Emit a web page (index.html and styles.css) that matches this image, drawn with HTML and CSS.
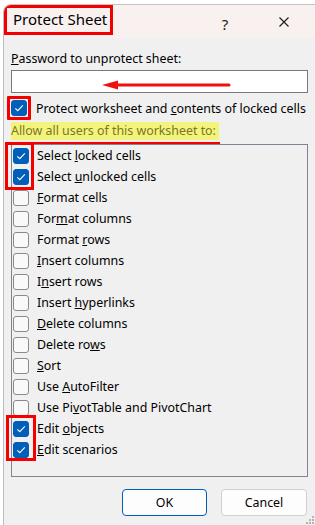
FILE: index.html
```html
<!DOCTYPE html>
<html>
<head>
<meta charset="utf-8">
<link rel="stylesheet" href="styles.css">
</head>
<body>
<div class="window">
  <div class="titlebar">
    <span class="title">Protect Sheet</span>
    <span class="spacer"></span>
    <span class="help">?</span>
    <span class="close"><svg width="10" height="10" viewBox="0 0 10 10"><path d="M0.5 0.5L9.5 9.5M9.5 0.5L0.5 9.5" stroke="#1a1a1a" stroke-width="1.1" fill="none"/></svg></span>
  </div>
  <div class="content">
    <div class="label"><u>P</u>assword to unprotect sheet:</div>
    <div class="input">
      <svg class="arrow" width="130" height="12" viewBox="0 0 130 12"><path d="M15 6H128" stroke="#f01010" stroke-width="3" stroke-linecap="round"/><path d="M1 6L17 1.5V10.5Z" fill="#f01010"/></svg>
    </div>
    <div class="main-check">
      <span class="boxed"><span class="cb checked"><svg width="16" height="16" viewBox="0 0 16 16"><path d="M4.3 8.3L6.8 10.7L11.8 5.4" stroke="#fff" stroke-width="1.1" fill="none"/></svg></span></span>
      <span class="text">Protect worksheet and <u>c</u>ontents of locked cells</span>
    </div>
    <div class="allow"><span class="hl">Allow all users of this worksheet to:</span></div>
    <div class="list">
      <div class="item"><span class="cb checked"><svg width="16" height="16" viewBox="0 0 16 16"><path d="M4.3 8.3L6.8 10.7L11.8 5.4" stroke="#fff" stroke-width="1.1" fill="none"/></svg></span><span class="text">Select <u>l</u>ocked cells</span></div>
      <div class="item"><span class="cb checked"><svg width="16" height="16" viewBox="0 0 16 16"><path d="M4.3 8.3L6.8 10.7L11.8 5.4" stroke="#fff" stroke-width="1.1" fill="none"/></svg></span><span class="text">Select <u>u</u>nlocked cells</span></div>
      <div class="item"><span class="cb"></span><span class="text"><u>F</u>ormat cells</span></div>
      <div class="item"><span class="cb"></span><span class="text">For<u>m</u>at columns</span></div>
      <div class="item"><span class="cb"></span><span class="text">Format <u>r</u>ows</span></div>
      <div class="item"><span class="cb"></span><span class="text"><u>I</u>nsert columns</span></div>
      <div class="item"><span class="cb"></span><span class="text">I<u>n</u>sert rows</span></div>
      <div class="item"><span class="cb"></span><span class="text">Insert <u>h</u>yperlinks</span></div>
      <div class="item"><span class="cb"></span><span class="text"><u>D</u>elete columns</span></div>
      <div class="item"><span class="cb"></span><span class="text">Delete ro<u>w</u>s</span></div>
      <div class="item"><span class="cb"></span><span class="text"><u>S</u>ort</span></div>
      <div class="item"><span class="cb"></span><span class="text">Use <u>A</u>utoFilter</span></div>
      <div class="item"><span class="cb"></span><span class="text">Use Pi<u>v</u>otTable and PivotChart</span></div>
      <div class="item"><span class="cb checked"><svg width="16" height="16" viewBox="0 0 16 16"><path d="M4.3 8.3L6.8 10.7L11.8 5.4" stroke="#fff" stroke-width="1.1" fill="none"/></svg></span><span class="text">Edit <u>o</u>bjects</span></div>
      <div class="item"><span class="cb checked"><svg width="16" height="16" viewBox="0 0 16 16"><path d="M4.3 8.3L6.8 10.7L11.8 5.4" stroke="#fff" stroke-width="1.1" fill="none"/></svg></span><span class="text"><u>E</u>dit scenarios</span></div>
      <div class="mark mark-top"></div>
      <div class="mark mark-bottom"></div>
    </div>
    <div class="buttons">
      <button class="btn primary">OK</button>
      <button class="btn">Cancel</button>
    </div>
  </div>
  <svg class="grip" width="10" height="10" viewBox="0 0 10 10"><g fill="#b4b4b4"><rect x="7" y="1" width="2" height="2"/><rect x="4" y="4" width="2" height="2"/><rect x="7" y="4" width="2" height="2"/><rect x="1" y="7" width="2" height="2"/><rect x="4" y="7" width="2" height="2"/><rect x="7" y="7" width="2" height="2"/></g></svg>
</div>
</body>
</html>
```

FILE: styles.css
```css
html, body {
  margin: 0;
  padding: 0;
  background: #ffffff;
  overflow: hidden;
}
body {
  width: 315px;
  height: 525px;
  font-family: "Noto Sans", "Segoe UI", sans-serif;
  font-size: 12.4px;
  color: #000;
}
.window {
  position: relative;
  margin: 4px 0 0 3px;
  height: 521px;
  box-sizing: border-box;
  border-left: 1px solid #bdbdbd;
  border-top: 1px solid #c4c4c4;
  border-top-left-radius: 8px;
  background: #f0f0f0;
  overflow: hidden;
}
.titlebar {
  height: 33px;
  display: flex;
  align-items: flex-start;
  background: #f9f1ef;
}
.title {
  box-sizing: border-box;
  width: 109px;
  height: 30px;
  border: 3px solid #f40000;
  padding-left: 6px;
  font-size: 15px;
  line-height: 23px;
  color: #000;
}
.spacer { flex: 1; }
.help {
  font-size: 15px;
  line-height: 16px;
  margin-top: 11px;
  width: 12px;
  text-align: center;
  color: #1a1a1a;
}
.close {
  display: flex;
  margin: 12px 26px 0 48px;
}
.content {
  padding: 0 7px 0 7px;
}
.label {
  margin-top: 13px;
  line-height: 16px;
  height: 16px;
}
.input {
  position: relative;
  margin-top: 3px;
  height: 23px;
  box-sizing: border-box;
  border: 1px solid #7a7a7a;
  background: #fff;
}
.arrow {
  position: absolute;
  left: 89px;
  top: 8px;
}
.main-check {
  margin-top: 5px;
  height: 20px;
  display: flex;
  align-items: center;
  gap: 5px;
}
.cb {
  box-sizing: border-box;
  width: 16px;
  height: 16px;
  flex: none;
  border: 1px solid #8a8a8a;
  border-radius: 3px;
  background: #f9f9f9;
  display: flex;
}
.cb.checked {
  border-color: #005fb8;
  background: #005fb8;
}
.cb svg { margin: -1px; }
.boxed {
  display: flex;
  flex: none;
  margin-left: -4px;
  padding: 1px;
  border: 3px solid #f40000;
  border-radius: 1px;
}
.text { white-space: nowrap; }
.allow {
  position: relative;
  margin-top: 4px;
  height: 18px;
  line-height: 18px;
}
.hl {
  display: inline-block;
  background: #f4f47c;
  color: #77772a;
  padding-right: 3px;
}
.allow::after {
  content: "";
  position: absolute;
  left: -4px;
  top: 20px;
  width: 213px;
  height: 3px;
  background: #f40000;
}
.list {
  position: relative;
  margin-top: 4px;
  height: 333px;
  box-sizing: border-box;
  border: 1px solid #828290;
  background: #f0f0f0;
  padding-left: 1px;
}
.item {
  height: 21px;
  display: flex;
  align-items: center;
  gap: 8px;
}
.mark {
  position: absolute;
  box-sizing: border-box;
  border: 3px solid #f40000;
}
.mark-top {
  left: -7px;
  top: -3px;
  width: 29px;
  height: 48px;
}
.mark-bottom {
  left: -6px;
  top: 270px;
  width: 30px;
  height: 46px;
}
.buttons {
  margin-top: 12px;
  display: flex;
  justify-content: flex-end;
  gap: 14px;
  padding-right: 1px;
}
.btn {
  box-sizing: border-box;
  width: 85px;
  height: 27px;
  font-family: "Noto Sans", "Segoe UI", sans-serif;
  font-size: 12.4px;
  color: #000;
  background: #fdfdfd;
  border: 1px solid #d0d0d0;
  border-radius: 4px;
  padding: 0;
}
.btn.primary {
  border-color: #005fb8;
}
.btn:last-child { width: 86px; }
.grip {
  position: absolute;
  right: 0;
  bottom: 0;
}
```
